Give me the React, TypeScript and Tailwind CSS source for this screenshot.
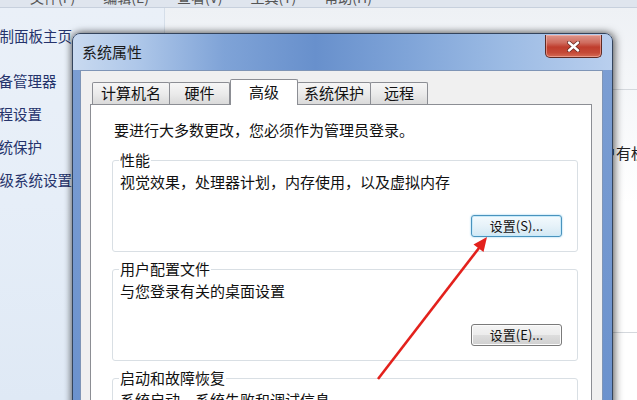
import React from "react";

const cjk = { fontFamily: '"Noto Sans CJK SC", "Noto Sans", sans-serif' };

function Tab({ label, w, active }: { label: string; w: string; active?: boolean }) {
  if (active) {
    return (
      <div
        className={`${w} h-[26px] -mb-px relative z-10 bg-white border border-b-0 border-[#8c8e94] rounded-t-[2px] flex items-center justify-center text-[15px] text-[#111]`}
      >
        {label}
      </div>
    );
  }
  return (
    <div
      className={`${w} h-[22px] border border-b-0 border-[#8c8e94] -ml-px first:ml-0 rounded-t-[2px] bg-gradient-to-b from-[#f6f6f6] via-[#ebebeb] to-[#dadada] flex items-center justify-center text-[15px] text-[#111]`}
    >
      {label}
    </div>
  );
}

function Group({
  title,
  desc,
  button,
  focused,
}: {
  title: string;
  desc: string;
  button?: string;
  focused?: boolean;
}) {
  return (
    <fieldset className="border border-[#d9dfe4] rounded-[3px] pl-[6px] pr-[15px] pb-[14px] mt-[8px] first:mt-0">
      <legend className="px-[1px] text-[15px] leading-[18px] text-[#111]">{title}</legend>
      <div className="mt-[4px] text-[15px] leading-[18px] text-[#111] pl-[1px]">{desc}</div>
      {button && (
        <div className="flex justify-end mt-[24px]">
          <div
            className={
              focused
                ? "w-[91px] h-[22px] rounded-[3px] border border-[#4a93bd] bg-gradient-to-b from-[#f4fafd] via-[#e6f2f9] to-[#d3e8f4] shadow-[0_0_2px_#7fc4ea,inset_0_0_0_1px_#c8eafa] flex items-center justify-center text-[13px] text-[#111]"
                : "w-[91px] h-[22px] rounded-[3px] border border-[#7a7a7a] bg-[linear-gradient(to_bottom,#f4f4f4_0%,#ececec_50%,#dddddd_51%,#d0d0d0_100%)] shadow-[inset_0_0_0_1px_#fcfcfc] flex items-center justify-center text-[13px] text-[#111]"
            }
          >
            {button}
          </div>
        </div>
      )}
    </fieldset>
  );
}

export default function App() {
  return (
    <div
      className="relative w-[637px] h-[400px] overflow-hidden bg-white"
      style={cjk}
    >
      {/* top strip */}
      <div className="h-[8px] bg-[#dfe5ee] border-b border-[#c7d0dd] overflow-hidden">
        <div className="-mt-[13px] pl-[30px] flex gap-[28px] text-[14px] text-[#555] whitespace-nowrap">
          <span>文件(F)</span>
          <span>编辑(E)</span>
          <span>查看(V)</span>
          <span>工具(T)</span>
          <span>帮助(H)</span>
        </div>
      </div>

      {/* background body */}
      <div className="flex h-[392px]">
        <div className="w-[165px] shrink-0 bg-gradient-to-b from-[#eaf0f8] via-[#e6eef8] to-[#dfe9f5] border-r border-[#d5dee9] pt-[18px] flex flex-col gap-[13px] text-[14.5px] leading-[20px] text-[#25336b] whitespace-nowrap">
          <div className="-ml-[15px] mb-[12px]">控制面板主页</div>
          <div className="-ml-[16px]">设备管理器</div>
          <div className="-ml-[16px]">远程设置</div>
          <div className="-ml-[16px]">系统保护</div>
          <div className="-ml-[15px]">高级系统设置</div>
        </div>
        <div className="flex-1 flex flex-col bg-gradient-to-b from-[#eef1f5] via-white to-white">
          <div className="h-[82px] shrink-0 border-b border-[#d4d8dd]" />
          <div className="mt-[54px] pl-[436px] text-[15px] leading-[18px] text-[#222] whitespace-nowrap">
            户有权限
          </div>
          <div className="mt-[170px] border-t border-[#d4d8dd]" />
        </div>
      </div>

      {/* dialog window */}
      <div className="absolute left-[72px] top-[33px] w-[541px] h-[400px] rounded-t-[8px] border border-[#34445c] bg-gradient-to-b from-[#7d9fd3] to-[#6a91cd] shadow-[2px_0_8px_rgba(0,0,0,0.55),-2px_0_6px_rgba(0,0,0,0.3)] flex flex-col">
        {/* title bar */}
        <div className="relative h-[36px] shrink-0 rounded-t-[7px] bg-[linear-gradient(to_right,#c9daf0_0%,#aec7e9_12%,#7fa3d7_28%,#6890cc_45%,#7fa4d8_62%,#9cbbe4_80%,#b9cfee_100%)] flex items-center pl-[9px] text-[15px] text-[#1a1a1a]">
          系统属性
          {/* close button */}
          <div className="absolute right-[10px] top-[1px] w-[57px] h-[23px] rounded-b-[5px] border border-t-0 border-[#5e2a24] bg-[linear-gradient(to_bottom,#dd958b_0%,#cf6c5e_35%,#bf3d2d_55%,#c54a37_80%,#d56c55_100%)] shadow-[inset_0_0_0_1px_rgba(255,200,190,0.5)] flex items-center justify-center">
            <svg width="13" height="11" viewBox="0 0 13 11">
              <path d="M2 1.5 L11 9.5 M11 1.5 L2 9.5" stroke="#6a2a22" strokeWidth="4" strokeLinecap="round" />
              <path d="M2 1.5 L11 9.5 M11 1.5 L2 9.5" stroke="#ffffff" strokeWidth="2.4" strokeLinecap="round" />
            </svg>
          </div>
        </div>

        {/* client area */}
        <div className="flex-1 ml-[7px] mr-[9px] bg-[#f0f0f0] border border-[#7f95b6] pt-[8px] pl-[9px] pr-[10px] flex flex-col">
          <div className="flex items-end pl-[2px]">
            <Tab label="计算机名" w="w-[78px]" />
            <Tab label="硬件" w="w-[61px]" />
            <Tab label="高级" w="w-[68px]" active />
            <Tab label="系统保护" w="w-[74px]" />
            <Tab label="远程" w="w-[58px] -ml-px" />
          </div>
          <div className="flex-1 bg-white border border-[#8c8e94] pt-[16px] pl-[21px] pr-[13px]">
            <div className="ml-[2px] text-[15px] leading-[18px] text-[#111]">
              要进行大多数更改，您必须作为管理员登录。
            </div>
            <div className="mt-[12px] flex flex-col">
              <Group
                title="性能"
                desc="视觉效果，处理器计划，内存使用，以及虚拟内存"
                button="设置(S)..."
                focused
              />
              <Group title="用户配置文件" desc="与您登录有关的桌面设置" button="设置(E)..." />
              <Group title="启动和故障恢复" desc="系统启动，系统失败和调试信息" />
            </div>
          </div>
        </div>
      </div>

      {/* red annotation arrow */}
      <svg className="absolute left-0 top-0 pointer-events-none" width="637" height="400" viewBox="0 0 637 400">
        <line x1="378" y1="379" x2="479" y2="248" stroke="#e3211c" strokeWidth="2.6" />
        <polygon points="487,237 483.5,252 473.5,244.5" fill="#e3211c" />
      </svg>
    </div>
  );
}
